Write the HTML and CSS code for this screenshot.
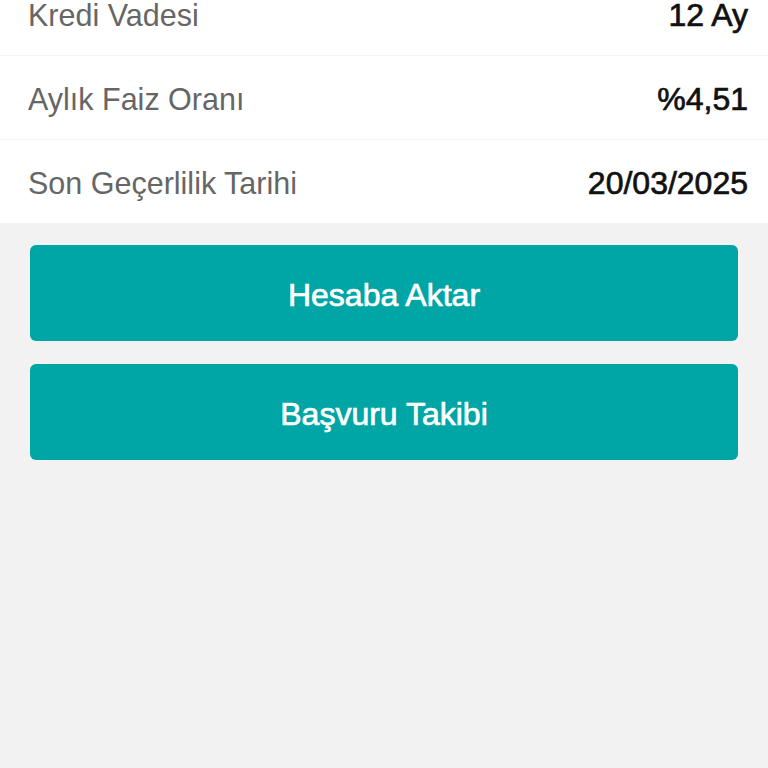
FILE: index.html
```html
<!DOCTYPE html>
<html lang="tr">
<head>
    <meta charset="UTF-8">
    <meta name="viewport" content="width=device-width, initial-scale=1.0">
    <title>Kredi Detayı</title>
    <link rel="stylesheet" href="styles.css">
</head>
<body>
    <div class="details">
        <div class="detail-row first">
            <span class="label">Kredi Vadesi</span>
            <span class="value">12 Ay</span>
        </div>
        <div class="detail-row">
            <span class="label">Aylık Faiz Oranı</span>
            <span class="value">%4,51</span>
        </div>
        <div class="detail-row">
            <span class="label">Son Geçerlilik Tarihi</span>
            <span class="value">20/03/2025</span>
        </div>
    </div>

    <div class="actions">
        <button class="action-button">Hesaba Aktar</button>
        <button class="action-button">Başvuru Takibi</button>
    </div>
</body>
</html>
```

FILE: styles.css
```css
* {
    margin: 0;
    padding: 0;
    box-sizing: border-box;
}

body {
    font-family: "Liberation Sans", Arial, sans-serif;
    background: #f2f2f3;
    min-height: 100vh;
    overflow: hidden;
}

.details {
    background: #ffffff;
}

.detail-row {
    display: flex;
    align-items: center;
    justify-content: space-between;
    height: 84px;
    padding: 4px 20px 0 28px;
    border-top: 1px solid #f4f4f4;
}

.detail-row.first {
    height: 55px;
    padding-top: 0;
    padding-bottom: 25px;
    border-top: none;
}

.label {
    color: #666666;
    font-size: 30.5px;
}

.value {
    color: #111111;
    font-size: 32px;
    -webkit-text-stroke: 0.7px #111111;
}

.actions {
    display: flex;
    flex-direction: column;
    gap: 23px;
    padding: 22px 30px;
}

.action-button {
    height: 96px;
    padding-top: 4px;
    border: none;
    border-radius: 6px;
    background: #00a5a5;
    color: #ffffff;
    font-family: "Liberation Sans", Arial, sans-serif;
    font-size: 32px;
    -webkit-text-stroke: 0.7px #ffffff;
    cursor: pointer;
}
```
